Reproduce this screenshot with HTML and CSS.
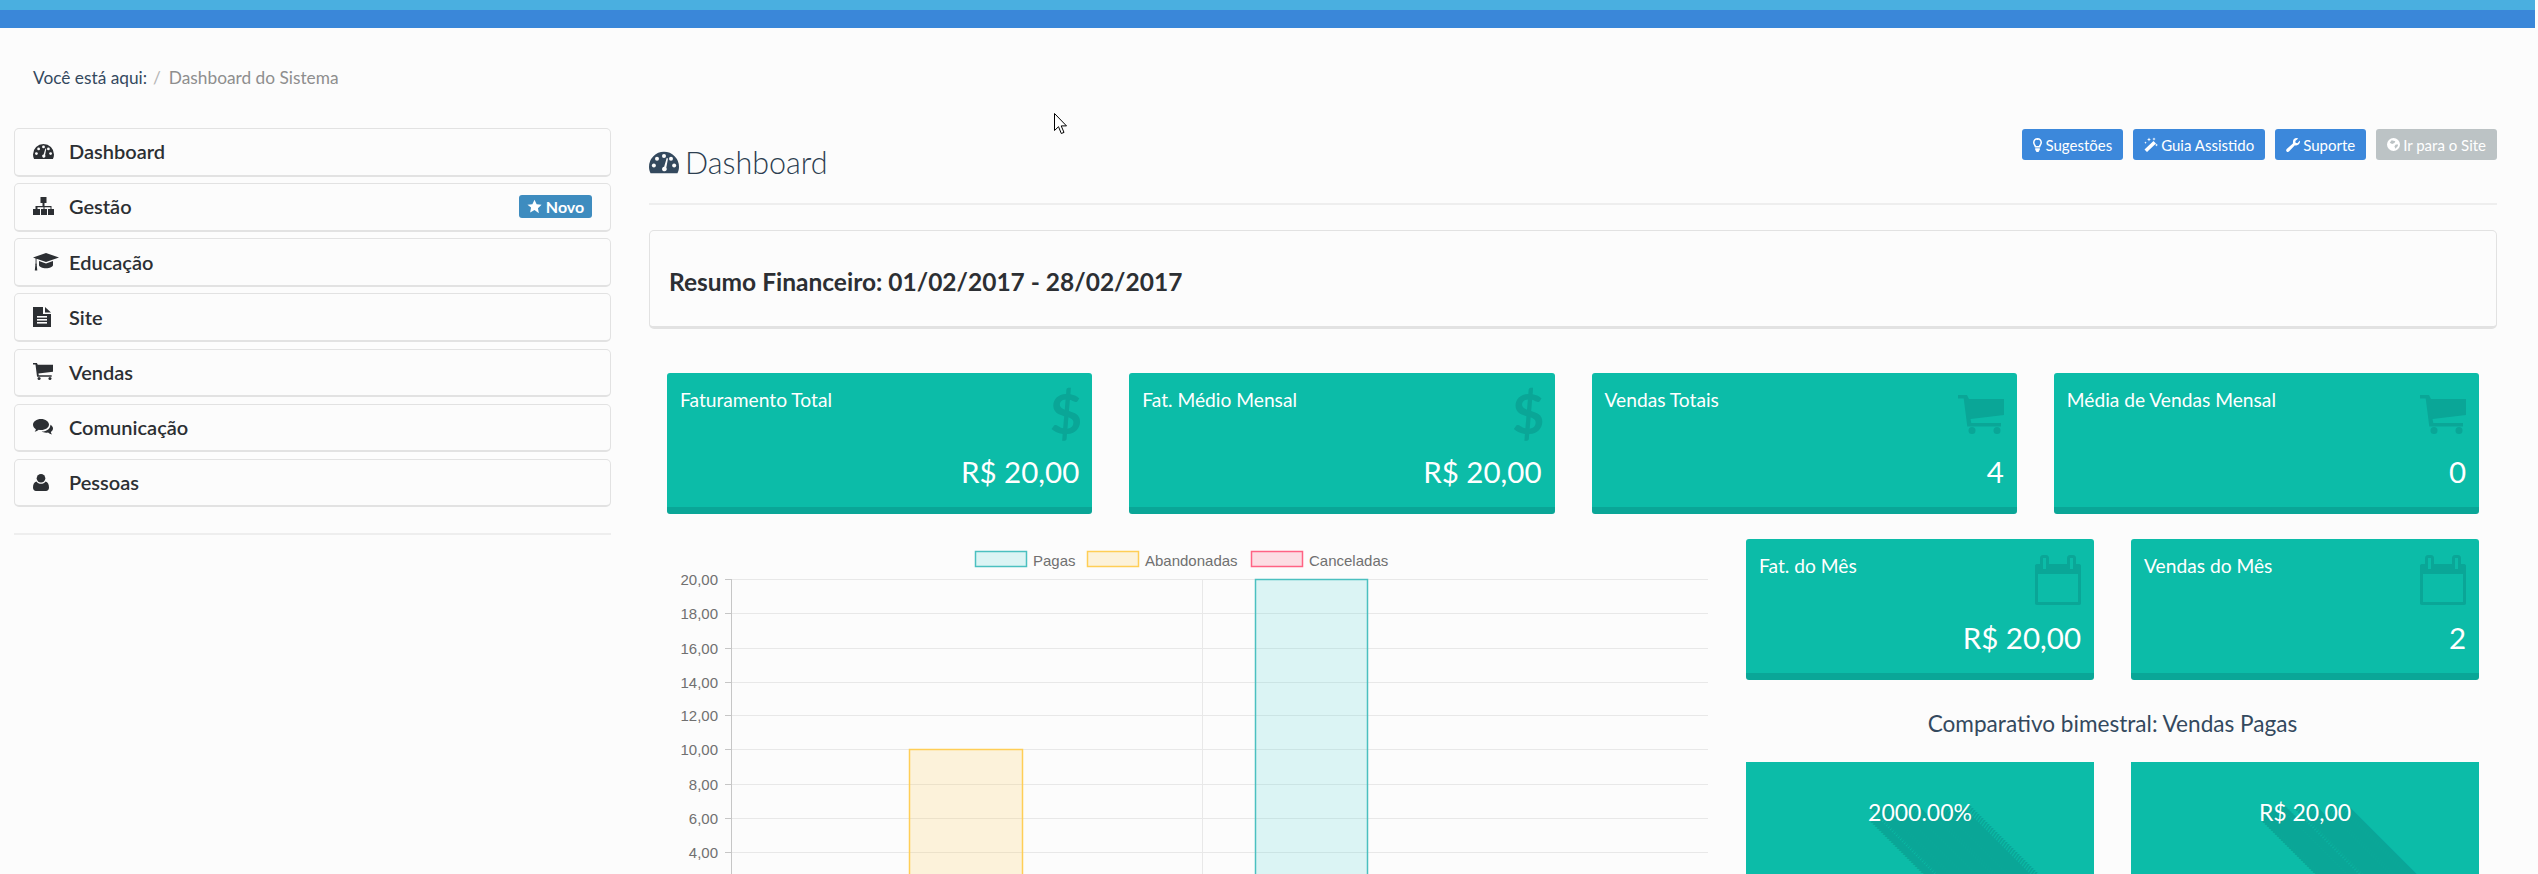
FILE: index.html
```html
<!DOCTYPE html>
<html lang="pt-BR">
<head>
    <meta charset="UTF-8">
    <title>Dashboard do Sistema</title>
    <link rel="stylesheet" href="styles.css">
</head>
<body>
<svg class="defs" width="0" height="0">
    <symbol id="i-gauge" viewBox="0 0 21 15">
        <path d="M10.5 0A10.5 10.5 0 0 0 0 10.5c0 1.7.4 3.2 1.1 4.5h18.8c.7-1.3 1.1-2.8 1.1-4.5A10.5 10.5 0 0 0 10.5 0z"/>
        <g class="hole">
            <circle cx="3.4" cy="9.6" r="1.4"/><circle cx="5.6" cy="4.9" r="1.4"/><circle cx="10.5" cy="2.9" r="1.4"/>
            <circle cx="15.4" cy="4.9" r="1.4"/><circle cx="17.6" cy="9.6" r="1.4"/>
            <path d="M12.4 4.4l.9.3-1.2 6.4c.4.5.5 1.200.1 1.800-.5.800-1.500 1-2.300.5-.8-.5-1-1.500-.5-2.300.3-.4.700-.700 1.200-.7z"/>
        </g>
    </symbol>
    <symbol id="i-sitemap" viewBox="0 0 21 18">
        <path d="M7.500 0h6v6h-2v3h7v3h2.500v6h-6v-6h2.500v-1.800h-6V12h2.500v6h-6v-6h2.500v-1.800h-6V12h2.500v6H0v-6h2.500V9h7V6h-2z"/>
    </symbol>
    <symbol id="i-cap" viewBox="0 0 26 18">
        <path d="M13 0l13 4.500-13 4.500L3.500 5.700v4.800c.5.300.5 1 .2 1.300l.6 5.600H1.800l.6-5.600c-.3-.3-.3-1 .2-1.300V5.400L0 4.500z"/>
        <path d="M6 8l7 2.400L20 8v4c0 1.800-3.200 3.200-7 3.200S6 13.800 6 12z"/>
    </symbol>
    <symbol id="i-file" viewBox="0 0 18 20">
        <path d="M0 0h10v7h8v13H0z"/><path d="M12 0l6 5.500h-6z"/>
        <g class="hole"><rect x="4" y="9" width="10" height="1.600"/><rect x="4" y="12" width="10" height="1.600"/><rect x="4" y="15" width="10" height="1.600"/></g>
    </symbol>
    <symbol id="i-cart" viewBox="0 0 46 39">
        <path d="M0 0h9l2 4h35v16l-33.500 4 .8 4H43v3.500H9.300L5.700 3.500H0z"/>
        <circle cx="14" cy="35.500" r="3.500"/><circle cx="39" cy="35.500" r="3.500"/>
    </symbol>
    <symbol id="i-comments" viewBox="0 0 20 17">
        <path d="M8 0c4.400 0 8 2.500 8 5.500S12.400 11 8 11c-.8 0-1.500-.1-2.200-.2C4.600 11.700 3.300 12.400 1.700 12.700c.6-.8 1-1.600 1.200-2.500C1.100 9.200 0 7.500 0 5.500 0 2.500 3.600 0 8 0z"/>
        <path d="M17.500 5.800C19 6.700 20 8 20 9.500c0 1.500-.9 2.700-2.200 3.500.2.900.6 1.700 1.200 2.500-1.600-.3-2.900-1-4-1.900-.6.100-1.200.2-1.900.2-1.700 0-3.300-.5-4.500-1.200 5.300.1 8.900-3.100 8.900-7.300z"/>
    </symbol>
    <symbol id="i-user" viewBox="0 0 16 17">
        <circle cx="8" cy="4.300" r="4.300"/>
        <path d="M3.400 7.500C4.500 9 6.100 9.800 8 9.800s3.500-.8 4.600-2.300C14.800 8 16 10.200 16 13.500c0 2.200-1.300 3.500-3 3.500H3c-1.700 0-3-1.300-3-3.500C0 10.200 1.200 8 3.400 7.500z"/>
    </symbol>
    <symbol id="i-calendar" viewBox="0 0 46 50">
        <path fill-rule="evenodd" d="M8 0h3c2 0 3 1.500 3 3v6h18V3c0-1.500 1-3 3-3h3c2 0 3 1.500 3 3v6h3c1.500 0 2 1 2 2v37c0 1-.5 2-2 2H2c-1.500 0-2-1-2-2V11c0-1 .5-2 2-2h3V3c0-1.500 1-3 3-3zm0 3v11h3V3zm27 0v11h3V3zM3 19v28h40V19z"/>
    </symbol>
</svg>

<div class="topbar"></div>

<div class="crumbs">
    <span class="crumb-here">Você está aqui:</span>
    <span class="crumb-sep">/</span>
    <span class="crumb-page">Dashboard do Sistema</span>
</div>

<div class="layout">
    <div class="sidebar">
        <a class="nav-item"><span class="nav-icon"><svg width="21" height="15"><use href="#i-gauge"/></svg></span>Dashboard</a>
        <a class="nav-item"><span class="nav-icon"><svg width="21" height="18"><use href="#i-sitemap"/></svg></span>Gestão
            <span class="badge">
                <svg width="15" height="15" viewBox="0 0 24 24"><path d="M12 1l3.400 7.300 7.900 1-5.800 5.400 1.500 7.900L12 17.700l-7 3.900 1.500-7.900L.7 9.300l7.900-1z"/></svg>
                Novo
            </span>
        </a>
        <a class="nav-item"><span class="nav-icon"><svg width="26" height="18"><use href="#i-cap"/></svg></span>Educação</a>
        <a class="nav-item"><span class="nav-icon"><svg width="18" height="20"><use href="#i-file"/></svg></span>Site</a>
        <a class="nav-item"><span class="nav-icon"><svg width="20" height="17"><use href="#i-cart"/></svg></span>Vendas</a>
        <a class="nav-item"><span class="nav-icon"><svg width="20" height="17"><use href="#i-comments"/></svg></span>Comunicação</a>
        <a class="nav-item"><span class="nav-icon"><svg width="16" height="17"><use href="#i-user"/></svg></span>Pessoas</a>
        <div class="sidebar-rule"></div>
    </div>

    <div class="main">
        <div class="page-head">
            <h1><svg width="30" height="23"><use href="#i-gauge"/></svg> Dashboard</h1>
            <div class="actions">
                <a class="btn">
                    <svg width="9" height="14" viewBox="0 0 9 14"><path fill-rule="evenodd" d="M4.500 0C7 0 9 1.900 9 4.400c0 1.900-1.600 3-1.900 5H1.900C1.600 7.400 0 6.300 0 4.400 0 1.900 2 0 4.500 0zm0 1.500C2.900 1.500 1.500 2.800 1.500 4.400c0 1.100 1 2.100 1.600 3.500h2.800c.6-1.400 1.600-2.400 1.600-3.500 0-1.600-1.400-2.900-3-2.900z"/><path d="M2.200 10.300h4.600v1.500L5.500 14h-2L2.200 11.800z"/></svg>
                    Sugestões
                </a>
                <a class="btn">
                    <svg width="14" height="15" viewBox="0 0 14 14"><path d="M9.500 3.500l2.500 2.500L3 14.500.5 12zM5 0l.6 1.400L7 2l-1.400.6L5 4l-.6-1.400L3 2l1.400-.6zM10 0l.5 1.100 1.100.5-1.100.5-.5 1.100-.5-1.100-1.100-.5 1.100-.5zM12.500 6l.4 1.100 1.100.4-1.100.4-.4 1.100-.4-1.100-1.100-.4 1.100-.4zM1.500 4l.4.8.8.4-.8.4-.4.8-.4-.8-.8-.4.8-.4z"/></svg>
                    Guia Assistido
                </a>
                <a class="btn">
                    <svg width="14" height="14" viewBox="0 0 14 14"><path d="M10.500 0c.7 0 1.300.2 1.800.5L9.300 2.900l.3 1.900 1.800.4 2.400-2.800c.1.400.2.800.2 1.200 0 2.100-1.700 3.900-3.800 3.900-.5 0-.9-.1-1.300-.2l-5.700 6c-.7.900-2 .9-2.600.1-.7-.7-.6-1.800.1-2.500l6.200-5.500C7 4 7 3.700 7 3.500 7 1.500 8.500 0 10.500 0z"/></svg>
                    Suporte
                </a>
                <a class="btn btn-muted">
                    <svg width="13" height="13" viewBox="0 0 14 14"><path fill-rule="evenodd" d="M7 0a7 7 0 1 1 0 14A7 7 0 0 1 7 0zM5 2.500L3 5l2.500 1.500L8 5.500 9 3.500zM9.500 7L8 9l1 2.500 2.500-2.500.5-2z"/></svg>
                    Ir para o Site
                </a>
            </div>
        </div>

        <div class="summary">
            <h2>Resumo Financeiro: 01/02/2017 - 28/02/2017</h2>
        </div>

        <div class="tile-row">
            <div class="tile">
                <div class="tile-top"><span>Faturamento Total</span><span class="tile-dollar">$</span></div>
                <div class="tile-value">R$ 20,00</div>
            </div>
            <div class="tile">
                <div class="tile-top"><span>Fat. Médio Mensal</span><span class="tile-dollar">$</span></div>
                <div class="tile-value">R$ 20,00</div>
            </div>
            <div class="tile">
                <div class="tile-top"><span>Vendas Totais</span><svg class="tile-icon" width="46" height="39"><use href="#i-cart"/></svg></div>
                <div class="tile-value">4</div>
            </div>
            <div class="tile">
                <div class="tile-top"><span>Média de Vendas Mensal</span><svg class="tile-icon" width="46" height="39"><use href="#i-cart"/></svg></div>
                <div class="tile-value">0</div>
            </div>
        </div>

        <div class="lower">
            <svg class="chart" width="1079" height="335" viewBox="667 539 1079 335">
                <g class="grid">
                    <path d="M731 579.500H1708M731 613.500H1708M731 648.500H1708M731 682.500H1708M731 715.500H1708M731 749.500H1708M731 784.500H1708M731 818.500H1708M731 852.500H1708"/>
                    <path d="M1202.500 579V874"/>
                </g>
                <path class="axis" d="M731.500 579V874M725 579.500H731M725 613.500H731M725 648.500H731M725 682.500H731M725 715.500H731M725 749.500H731M725 784.500H731M725 818.500H731M725 852.500H731"/>
                <g class="ticks">
                    <text x="718" y="579">20,00</text>
                    <text x="718" y="613">18,00</text>
                    <text x="718" y="648">16,00</text>
                    <text x="718" y="682">14,00</text>
                    <text x="718" y="715">12,00</text>
                    <text x="718" y="749">10,00</text>
                    <text x="718" y="784">8,00</text>
                    <text x="718" y="818">6,00</text>
                    <text x="718" y="852">4,00</text>
                </g>
                <rect class="amber" x="909.500" y="749.500" width="113" height="140"/>
                <rect class="teal" x="1255.500" y="579.500" width="112" height="310"/>
                <rect class="teal" x="975.500" y="551.500" width="51" height="15"/>
                <rect class="amber" x="1087.500" y="551.500" width="51" height="15"/>
                <rect class="pink" x="1251.500" y="551.500" width="51" height="15"/>
                <g class="legend">
                    <text x="1033" y="560">Pagas</text>
                    <text x="1145" y="560">Abandonadas</text>
                    <text x="1309" y="560">Canceladas</text>
                </g>
            </svg>

            <div class="side">
                <div class="tile-pair">
                    <div class="tile">
                        <div class="tile-top"><span>Fat. do Mês</span><svg class="tile-icon tile-cal" width="46" height="50"><use href="#i-calendar"/></svg></div>
                        <div class="tile-value">R$ 20,00</div>
                    </div>
                    <div class="tile">
                        <div class="tile-top"><span>Vendas do Mês</span><svg class="tile-icon tile-cal" width="46" height="50"><use href="#i-calendar"/></svg></div>
                        <div class="tile-value">2</div>
                    </div>
                </div>
                <h3>Comparativo bimestral: Vendas Pagas</h3>
                <div class="tile-pair">
                    <div class="flat-tile"><span>2000.00%</span></div>
                    <div class="flat-tile"><span>R$ 20,00</span></div>
                </div>
            </div>
        </div>
    </div>
</div>

<svg class="cursor" width="13" height="22" viewBox="0 0 13 22"><path d="M.5.500v17l4-3.800 2.800 6.800 2.700-1.100-2.800-6.500h5.300z"/></svg>
</body>
</html>
```

FILE: styles.css
```css
* {
    box-sizing: border-box;
}

html, body {
    height: 874px;
    overflow: hidden;
}

body {
    margin: 0;
    background: #fcfcfc;
    color: #2c2f33;
    font-family: "Lato", "Liberation Sans", sans-serif;
    position: relative;
}

.defs {
    position: absolute;
}

.hole {
    fill: #fcfcfc;
}

.topbar {
    width: 2535px;
    height: 28px;
    background: #3a87d9;
    border-top: 10px solid #4aafe0;
}

.crumbs {
    height: 100px;
    padding: 0 0 2px 33px;
    display: flex;
    align-items: center;
    font-size: 17.3px;
}

.crumb-here {
    color: #34495e;
}

.crumb-sep {
    color: #b5b5b5;
    margin: 0 8px 0 6px;
}

.crumb-page {
    color: #8e8e8e;
}

.layout {
    width: 2535px;
    padding-left: 14px;
    display: grid;
    grid-template-columns: 597px 1848px;
    column-gap: 38px;
}

.nav-item {
    height: 48.5px;
    margin-bottom: 6.67px;
    padding: 0 18px 1px 18px;
    display: flex;
    align-items: center;
    background: #fcfcfc;
    border: 1px solid #e2e2e2;
    border-bottom-width: 2px;
    border-radius: 5px;
    font-size: 20px;
    font-weight: 600;
    color: #2c2f33;
}

.nav-icon {
    width: 36px;
    flex: none;
    display: flex;
    align-items: center;
    fill: #2c2f33;
}

.badge {
    margin-left: auto;
    width: 73px;
    height: 23px;
    display: flex;
    align-items: center;
    justify-content: center;
    gap: 4px;
    background: #3e8cbf;
    border-radius: 3px;
    color: #fff;
    fill: #fff;
    font-size: 16px;
    font-weight: 700;
}

.sidebar-rule {
    margin-top: 26px;
    border-top: 2px solid #eeeeee;
}

.page-head {
    height: 77px;
    padding-top: 1px;
    display: flex;
    justify-content: space-between;
    align-items: flex-start;
    border-bottom: 2px solid #eeeeee;
}

h1 {
    margin: 13px 0 0;
    display: flex;
    align-items: center;
    gap: 6px;
    font-size: 30.5px;
    font-weight: 300;
    line-height: 40px;
    color: #2c3e50;
    fill: #34495e;
}

.actions {
    display: flex;
    gap: 10px;
}

.btn {
    height: 31px;
    padding: 0 11px;
    display: flex;
    align-items: center;
    gap: 3px;
    background: #3c88db;
    border-radius: 3px;
    color: #fff;
    fill: #fff;
    font-size: 15px;
}

.btn-muted {
    background: #bcc3c5;
}

.summary {
    height: 99px;
    margin-top: 25px;
    padding: 35px 19px 0;
    border: 1px solid #e2e2e2;
    border-bottom-width: 3px;
    border-radius: 5px;
}

.summary h2 {
    margin: 0;
    font-size: 24.5px;
    font-weight: 700;
    line-height: 31px;
    color: #2c2f33;
}

.tile-row {
    margin-top: 44px;
    padding: 0 18px;
    display: grid;
    grid-template-columns: repeat(4, 1fr);
    column-gap: 37px;
}

.tile {
    height: 141px;
    padding: 12px 13px 0;
    background: #0cbca8;
    border-bottom: 7px solid #0aa697;
    border-radius: 3px;
    color: #fff;
}

.tile-top {
    height: 55px;
    display: flex;
    justify-content: space-between;
    align-items: flex-start;
    font-size: 19.2px;
    line-height: 30px;
}

.tile-icon {
    margin-top: 10px;
    fill: #0aa697;
}

.tile-cal {
    margin-top: 4px;
}

.tile-dollar {
    margin: 3px -3px 0 0;
    color: #0aa697;
    font-size: 56px;
    font-weight: 700;
    line-height: 50px;
}

.tile-value {
    margin-top: 12px;
    text-align: right;
    font-size: 29.5px;
    line-height: 40px;
}

.lower {
    margin-top: 25px;
    padding-left: 18px;
    display: flex;
}

.chart {
    flex: none;
    display: block;
}

.grid path {
    fill: none;
    stroke: #e8e8e8;
}

.axis {
    fill: none;
    stroke: #c6c6c6;
}

.ticks text, .legend text {
    font-family: "Liberation Sans", sans-serif;
    font-size: 15px;
    fill: #707070;
    dominant-baseline: central;
}

.ticks text {
    text-anchor: end;
}

.teal {
    fill: rgba(90, 215, 215, 0.2);
    stroke: #4bc0c0;
    stroke-width: 1.5;
}

.amber {
    fill: rgba(255, 206, 86, 0.2);
    stroke: #ffce56;
    stroke-width: 1.5;
}

.pink {
    fill: rgba(255, 99, 132, 0.2);
    stroke: #ff6384;
    stroke-width: 1.5;
}

.side {
    width: 733px;
    flex: none;
}

.tile-pair {
    display: grid;
    grid-template-columns: 348px 348px;
    column-gap: 37px;
}

.side h3 {
    height: 82px;
    margin: 0;
    text-align: center;
    font-size: 22.6px;
    font-weight: 400;
    line-height: 87px;
    color: #34495e;
}

.flat-tile {
    height: 200px;
    padding-top: 32px;
    overflow: hidden;
    background: #0cbca8;
    text-align: center;
    color: #fff;
    font-size: 23px;
    line-height: 36px;
    text-shadow: 2px 2px #0aa697, 4px 4px #0aa697, 6px 6px #0aa697, 8px 8px #0aa697, 10px 10px #0aa697,
        12px 12px #0aa697, 14px 14px #0aa697, 16px 16px #0aa697, 18px 18px #0aa697, 20px 20px #0aa697,
        22px 22px #0aa697, 24px 24px #0aa697, 26px 26px #0aa697, 28px 28px #0aa697, 30px 30px #0aa697,
        32px 32px #0aa697, 34px 34px #0aa697, 36px 36px #0aa697, 38px 38px #0aa697, 40px 40px #0aa697,
        42px 42px #0aa697, 44px 44px #0aa697, 46px 46px #0aa697, 48px 48px #0aa697, 50px 50px #0aa697,
        52px 52px #0aa697, 54px 54px #0aa697, 56px 56px #0aa697, 58px 58px #0aa697, 60px 60px #0aa697,
        62px 62px #0aa697, 64px 64px #0aa697, 66px 66px #0aa697, 68px 68px #0aa697, 70px 70px #0aa697;
}

.cursor {
    position: absolute;
    left: 1054px;
    top: 113px;
    fill: #fff;
    stroke: #000;
}
```
